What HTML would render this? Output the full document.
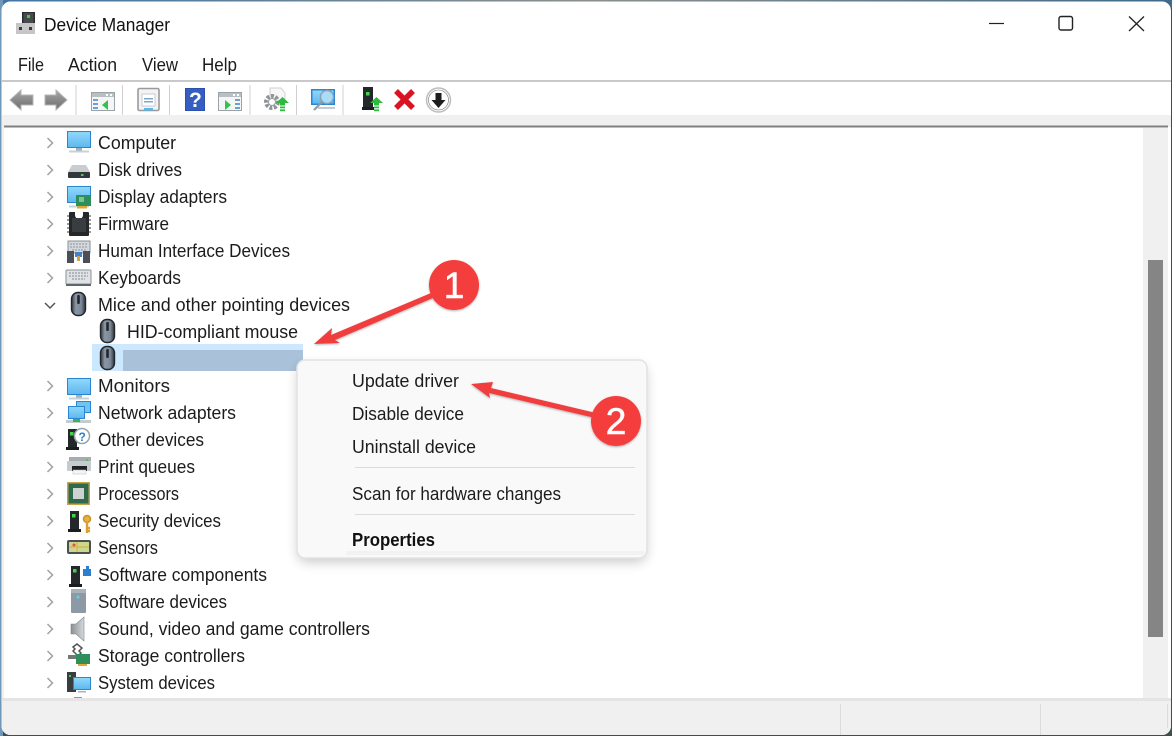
<!DOCTYPE html>
<html><head><meta charset="utf-8"><title>Device Manager</title>
<style>html,body{margin:0;padding:0;background:#fff;overflow:hidden}svg{display:block;filter:blur(.35px)}
text{font-family:"Liberation Sans",sans-serif;font-size:18px;fill:#1c1c1c}</style></head><body>
<svg width="1172" height="736" viewBox="0 0 1172 736" xmlns="http://www.w3.org/2000/svg">
<defs>
<linearGradient id="wp" x1="0" y1="0" x2="1" y2="0"><stop offset="0" stop-color="#3f76a6"/><stop offset=".5" stop-color="#8a8f8c"/><stop offset="1" stop-color="#3f6a8a"/></linearGradient>
<linearGradient id="scr" x1="0" y1="0" x2="0" y2="1"><stop offset="0" stop-color="#8fd8fb"/><stop offset="1" stop-color="#5fb8ee"/></linearGradient>
<linearGradient id="arr" x1="0" y1="0" x2="0" y2="1"><stop offset="0" stop-color="#a8a8a8"/><stop offset="1" stop-color="#6c6c6c"/></linearGradient>
<linearGradient id="ms" x1="0" y1="0" x2="1" y2="0"><stop offset="0" stop-color="#33383e"/><stop offset=".3" stop-color="#8a96a3"/><stop offset=".7" stop-color="#7c8998"/><stop offset="1" stop-color="#2d3238"/></linearGradient>
<linearGradient id="spk" x1="0" y1="0" x2="1" y2="0"><stop offset="0" stop-color="#8b9094"/><stop offset="1" stop-color="#d6d9db"/></linearGradient>
<filter id="sh" x="-10%" y="-10%" width="120%" height="125%"><feGaussianBlur stdDeviation="6"/></filter>
<filter id="ds" x="-20%" y="-20%" width="140%" height="140%"><feDropShadow dx="0" dy="1" stdDeviation="1" flood-color="#000" flood-opacity=".3"/></filter>
<g id="mouse"><rect x="1.5" y="0.5" width="14" height="23" rx="6.5" fill="url(#ms)" stroke="#22262b" stroke-width="1.4"/><rect x="7.2" y="3" width="2.6" height="9" rx="1" fill="#23272c"/></g>
<g id="mon"><rect x="1" y="0" width="24" height="17" fill="#2a86d2"/><rect x="2" y="1" width="22" height="15" fill="url(#scr)"/><rect x="10" y="17" width="6" height="2.5" fill="#9fb2c0"/><rect x="3" y="19.5" width="20" height="2" fill="#c6d2da"/></g>
<g id="srv"><rect x="3" y="1" width="9" height="18" fill="#25282b"/><rect x="5" y="4" width="3.5" height="3.5" fill="#3fd44a"/><path d="M1 19h13v3H1z" fill="#1b1d1f"/></g>
<path id="chev" d="M-2.5-5 L2.5 0 L-2.5 5" fill="none" stroke="#a2a2a2" stroke-width="1.5"/>
<g id="upg"><path d="M0 6 L6.5 0 L13 6 H9 V8.5 H4 V6Z" fill="#2dbb3c"/><rect x="4" y="9.5" width="5" height="1.8" fill="#2dbb3c"/><rect x="4" y="12.4" width="5" height="1.8" fill="#2dbb3c"/></g>
<g id="win"><rect x="0.5" y="0.5" width="23" height="18" fill="#f5f5f5" stroke="#9aa3a8"/><rect x="1" y="1" width="22" height="4" fill="#b9c0c4"/><rect x="15" y="2" width="2" height="2" fill="#fff"/><rect x="19" y="2" width="2" height="2" fill="#fff"/></g>
</defs>

<rect width="1172" height="736" fill="#3f4f50"/>
<rect width="1172" height="8" fill="url(#wp)"/>
<rect x="0" y="0" width="3" height="736" fill="#6f97b8"/>
<rect x="1.500" y="1.500" width="1169.500" height="733.500" rx="9" fill="#fff"/>

<!-- title -->
<g>
<rect x="22" y="12" width="13" height="12" fill="#2a2d30"/><rect x="23.5" y="13" width="10" height="10" fill="#474a4d"/><rect x="27" y="15" width="3" height="3" fill="#36d24a"/>
<rect x="16" y="23" width="19" height="11" fill="#c6c6c6"/><rect x="19" y="27" width="3" height="3" fill="#3a3a3a"/><rect x="29" y="27" width="3" height="3" fill="#3a3a3a"/>
</g>
<text x="44" y="31" textLength="126" lengthAdjust="spacingAndGlyphs" style="fill:#111">Device Manager</text>
<path d="M989 23.5h15" stroke="#222" stroke-width="1.2"/>
<rect x="1059" y="16.5" width="13.5" height="13.5" rx="2" fill="none" stroke="#222" stroke-width="1.4"/>
<path d="M1129 16.5L1144 31M1144 16.5L1129 31" stroke="#222" stroke-width="1.3" fill="none"/>

<!-- menu -->
<text x="18" y="71" textLength="26" lengthAdjust="spacingAndGlyphs">File</text>
<text x="68" y="71" textLength="49" lengthAdjust="spacingAndGlyphs">Action</text>
<text x="142" y="71" textLength="36" lengthAdjust="spacingAndGlyphs">View</text>
<text x="202" y="71" textLength="35" lengthAdjust="spacingAndGlyphs">Help</text>
<rect x="2" y="80" width="1169" height="2" fill="#c9c9c9"/>

<!-- toolbar strip -->
<rect x="2" y="115" width="1169" height="12" fill="#f0f0f0"/>
<g fill="#d0d0d0">
<rect x="75.5" y="85" width="1" height="30"/><rect x="122" y="85" width="1" height="30"/><rect x="169" y="85" width="1" height="30"/><rect x="249.500" y="85" width="1" height="30"/><rect x="296" y="85" width="1" height="30"/><rect x="342.500" y="85" width="1" height="30"/>
</g>
<path d="M10 100L21 90V95H33V105H21V110Z" fill="url(#arr)" stroke="#b5b5b5"/>
<path d="M67 100L56 90V95H45V105H56V110Z" fill="url(#arr)" stroke="#b5b5b5"/>
<use href="#win" x="91" y="92"/>
<g><rect x="93" y="99" width="5" height="2" fill="#6aa2d8"/><rect x="93" y="103" width="5" height="2" fill="#6aa2d8"/><rect x="93" y="107" width="5" height="2" fill="#6aa2d8"/><path d="M102 105L108 100V110Z" fill="#33c24a"/></g>
<rect x="138" y="88.500" width="21" height="22" rx="1.5" fill="#f3f3f3" stroke="#9a9a9a" stroke-width="1.6"/><rect x="142" y="94" width="13" height="12" fill="#fff" stroke="#c6ced4"/><rect x="144" y="98" width="9" height="1.500" fill="#7da8c8"/><rect x="144" y="101" width="9" height="1.500" fill="#7da8c8"/><rect x="144" y="108" width="9" height="2.500" fill="#58b8e8"/>
<rect x="185" y="88" width="20" height="23" fill="#2a4fb0"/><rect x="186" y="89" width="18" height="21" fill="#3a62c4" opacity=".8"/>
<text x="189" y="107" style="font-size:21px;font-weight:bold;fill:#fff">?</text>
<use href="#win" x="218" y="92"/>
<g><path d="M225 100L231 105L225 110Z" fill="#33c24a"/><rect x="235" y="99" width="5" height="2" fill="#6aa2d8"/><rect x="235" y="103" width="5" height="2" fill="#6aa2d8"/><rect x="235" y="107" width="5" height="2" fill="#6aa2d8"/></g>
<path d="M270 88h11l4 5v8h-15z" fill="#f7f7f7" stroke="#cfcfcf"/>
<circle cx="272" cy="102" r="6" fill="none" stroke="#8e9498" stroke-width="4" stroke-dasharray="3 1.500"/><circle cx="272" cy="102" r="3.500" fill="#fff" stroke="#9a9a9a"/>
<use href="#upg" x="276" y="97"/>
<rect x="311" y="89" width="24" height="16" fill="#2a86d2"/><rect x="312.500" y="90.500" width="21" height="13" fill="url(#scr)"/><circle cx="327" cy="97" r="6.500" fill="#a8dcf7" stroke="#8ba2b4" stroke-width="1.500"/><path d="M322 102L314 110" stroke="#8d9aa4" stroke-width="2.200"/><rect x="318" y="107" width="17" height="2" fill="#c2ccd2"/>
<rect x="363" y="87" width="10" height="20" fill="#25282b"/><rect x="366" y="92" width="3.500" height="3.500" fill="#3fd44a"/><rect x="362" y="107" width="12" height="3" fill="#1b1d1f"/>
<use href="#upg" x="370" y="97"/>
<path d="M396 91L413 108M413 91L396 108" stroke="#d81522" stroke-width="5.500" fill="none"/>
<circle cx="438.500" cy="100" r="12" fill="#fff" stroke="#bdbdbd" stroke-width="1.500"/><circle cx="438.500" cy="100" r="10" fill="#fff" stroke="#6f6f6f" stroke-width=".6"/>
<path d="M435.500 93h6v7h4L438.500 108L431.500 100h4z" fill="#1d1d1d"/>

<!-- tree frame -->
<rect x="4" y="125.500" width="1164" height="2" fill="#808080"/>
<rect x="4" y="127" width="1164" height="1" fill="#c0c0c0"/>
<rect x="2" y="127" width="2" height="573" fill="#f0f0f0"/>
<rect x="4" y="128" width="1139" height="570" fill="#fff"/>
<rect x="1143" y="128" width="25" height="570" fill="#f0f0f0"/>
<rect x="1148" y="260" width="15" height="377" fill="#858585"/>

<!-- status bar -->
<rect x="2" y="698" width="1169" height="3" fill="#e4e4e4"/>
<path d="M1.500 701H1171V726a9 9 0 0 1-9 9H10.500a9 9 0 0 1-9-9Z" fill="#f0f0f0"/>
<rect x="840" y="704" width="1" height="31" fill="#dcdcdc"/><rect x="1040" y="704" width="1" height="31" fill="#dcdcdc"/>
<rect x="1167" y="704" width="1" height="24" fill="#dcdcdc"/>

<!-- chevrons -->
<use href="#chev" x="50" y="143"/><use href="#chev" x="50" y="170"/><use href="#chev" x="50" y="197"/><use href="#chev" x="50" y="224"/><use href="#chev" x="50" y="251"/><use href="#chev" x="50" y="278"/>
<path d="M45 303L50 308L55 303" fill="none" stroke="#555" stroke-width="1.500"/>
<use href="#chev" x="50" y="386"/><use href="#chev" x="50" y="413"/><use href="#chev" x="50" y="440"/><use href="#chev" x="50" y="467"/><use href="#chev" x="50" y="494"/><use href="#chev" x="50" y="521"/><use href="#chev" x="50" y="548"/><use href="#chev" x="50" y="575"/><use href="#chev" x="50" y="602"/><use href="#chev" x="50" y="629"/><use href="#chev" x="50" y="656"/><use href="#chev" x="50" y="683"/>

<!-- selection -->
<rect x="92" y="344" width="211" height="27" fill="#cce8ff"/>
<rect x="123" y="350" width="180" height="21" fill="#a9c2d9"/>

<!-- tree icons -->
<use href="#mon" x="66" y="131"/>
<g><path d="M72 165H86L90 172H68Z" fill="#c9cdd0"/><rect x="68" y="172" width="22" height="6" rx="1" fill="#35383a"/><rect x="81" y="174" width="2.500" height="2" fill="#3fd44a"/></g>
<use href="#mon" x="66" y="186"/><rect x="76" y="195" width="15" height="11" fill="#2f8f5c"/><rect x="79" y="197" width="5" height="5" fill="#7ac48e"/><rect x="77" y="206" width="10" height="2.500" fill="#e0a82c"/>
<g><rect x="69" y="212" width="20" height="24" rx="1" fill="#25282b"/><path d="M75 212h8v3a4 4 0 0 1-8 0z" fill="#fff"/><path d="M67 216h2M67 220h2M67 224h2M67 228h2M67 232h2M89 216h2M89 220h2M89 224h2M89 228h2M89 232h2" stroke="#777" stroke-width="1.500"/><rect x="72" y="218" width="14" height="14" fill="#3a3d40"/></g>
<g><rect x="68" y="241" width="22" height="12" fill="#d4d8dc" stroke="#8a9096"/><path d="M70 244h18M70 247h18M72 250h14" stroke="#8e949a" stroke-dasharray="2 1"/><path d="M67 251h7v12h-7zM83 251h7v12h-7z" fill="#4b5058"/><rect x="75" y="252" width="7" height="5" fill="#3f83c8"/><rect x="77" y="256" width="3" height="5" fill="#d8a23c"/></g>
<g><rect x="66" y="270" width="25" height="14" rx="1" fill="#dfe3e6" stroke="#8a9096"/><path d="M69 273h19M69 276h19M72 279h13" stroke="#a2a8ae" stroke-width="1.500" stroke-dasharray="2 1"/><rect x="66" y="284" width="25" height="2" fill="#60666c"/></g>
<use href="#mouse" x="70" y="292"/>
<use href="#mouse" x="99" y="319"/>
<use href="#mouse" x="99" y="346"/>
<use href="#mon" x="66" y="378"/>
<g><rect x="76" y="401" width="15" height="12" fill="#2a86d2"/><rect x="77" y="402" width="13" height="10" fill="#6fc4f2"/><rect x="68" y="406" width="17" height="13" fill="#2a86d2"/><rect x="69" y="407" width="15" height="11" fill="url(#scr)"/><rect x="66" y="420" width="25" height="3" fill="#c4ccd0"/><path d="M73 419h7v3h-7z" fill="#3cb44a"/></g>
<g><use href="#srv" x="65" y="428"/><circle cx="82" cy="436" r="7.500" fill="#fff" stroke="#9aa4ac" stroke-width="1.500"/><text x="78.500" y="441" style="font-size:12px;font-weight:bold;fill:#2a7fd0">?</text></g>
<g><rect x="69" y="457" width="22" height="4" fill="#a6acb0"/><rect x="67" y="461" width="24" height="10" rx="1" fill="#c6cbce"/><rect x="72" y="466" width="15" height="5" fill="#222"/><rect x="73" y="470" width="13" height="4" fill="#f5f5f5" stroke="#bbb" stroke-width=".5"/><rect x="86" y="459" width="2" height="2" fill="#3fd44a"/></g>
<g><rect x="67" y="482" width="23" height="23" fill="#c9a24a"/><rect x="68.500" y="483.500" width="20" height="20" fill="#2e6a4e"/><rect x="73" y="488" width="11" height="11" fill="#cfd2d0"/></g>
<g><use href="#srv" x="67" y="510"/><circle cx="87" cy="519" r="3.500" fill="#e8b040" stroke="#c99428" stroke-width="1.500"/><path d="M87 522v11M87 528h3M87 531h3" stroke="#dba030" stroke-width="2.400"/></g>
<g><rect x="67" y="540" width="24" height="14" rx="2" fill="#4c5054"/><rect x="69" y="542" width="20" height="10" fill="#c9d88c"/><path d="M77 542v10M69 547h20" stroke="#e3b04c" stroke-width="1.200"/><circle cx="74" cy="545" r="1.500" fill="#e05050"/></g>
<g><use href="#srv" x="68" y="565"/><path d="M83 569h3v-3h3v3h2v7h-8z" fill="#2a7fd0"/></g>
<g><rect x="71" y="589" width="15" height="24" rx="1" fill="#8d9aa6"/><rect x="71" y="589" width="15" height="4" fill="#a8b2bb"/><circle cx="78" cy="597" r="1.500" fill="#5fd0e8"/></g>
<path d="M71 624h5l8-7v24l-8-7h-5z" fill="url(#spk)" stroke="#7e8388" stroke-width=".6"/>
<g><path d="M73 647l4-3 5 4-3 3 2 2-3 3-5-5 2-2z" fill="none" stroke="#555" stroke-width="1.500"/><rect x="68" y="655" width="10" height="4" fill="#777"/><rect x="76" y="654" width="14" height="10" fill="#2f8f5c"/><rect x="78" y="664" width="9" height="2" fill="#e0a82c"/></g>
<g><rect x="67" y="672" width="9" height="20" fill="#3a3d40"/><rect x="69" y="675" width="2" height="2" fill="#3fd44a"/><rect x="73" y="677" width="18" height="13" fill="#2a86d2"/><rect x="74" y="678" width="16" height="11" fill="url(#scr)"/><rect x="78" y="691" width="8" height="1.500" fill="#a8b4bc"/></g>
<rect x="74" y="697" width="8" height="1" fill="#999"/>

<!-- tree labels -->
<text x="98" y="149" textLength="78" lengthAdjust="spacingAndGlyphs">Computer</text>
<text x="98" y="176" textLength="84" lengthAdjust="spacingAndGlyphs">Disk drives</text>
<text x="98" y="203" textLength="129" lengthAdjust="spacingAndGlyphs">Display adapters</text>
<text x="98" y="230" textLength="71" lengthAdjust="spacingAndGlyphs">Firmware</text>
<text x="98" y="257" textLength="192" lengthAdjust="spacingAndGlyphs">Human Interface Devices</text>
<text x="98" y="284" textLength="83" lengthAdjust="spacingAndGlyphs">Keyboards</text>
<text x="98" y="311" textLength="252" lengthAdjust="spacingAndGlyphs">Mice and other pointing devices</text>
<text x="127" y="338" textLength="171" lengthAdjust="spacingAndGlyphs">HID-compliant mouse</text>
<text x="98" y="392" textLength="72" lengthAdjust="spacingAndGlyphs">Monitors</text>
<text x="98" y="419" textLength="138" lengthAdjust="spacingAndGlyphs">Network adapters</text>
<text x="98" y="446" textLength="106" lengthAdjust="spacingAndGlyphs">Other devices</text>
<text x="98" y="473" textLength="97" lengthAdjust="spacingAndGlyphs">Print queues</text>
<text x="98" y="500" textLength="81" lengthAdjust="spacingAndGlyphs">Processors</text>
<text x="98" y="527" textLength="123" lengthAdjust="spacingAndGlyphs">Security devices</text>
<text x="98" y="554" textLength="60" lengthAdjust="spacingAndGlyphs">Sensors</text>
<text x="98" y="581" textLength="169" lengthAdjust="spacingAndGlyphs">Software components</text>
<text x="98" y="608" textLength="129" lengthAdjust="spacingAndGlyphs">Software devices</text>
<text x="98" y="635" textLength="272" lengthAdjust="spacingAndGlyphs">Sound, video and game controllers</text>
<text x="98" y="662" textLength="147" lengthAdjust="spacingAndGlyphs">Storage controllers</text>
<text x="98" y="689" textLength="117" lengthAdjust="spacingAndGlyphs">System devices</text>

<!-- context menu -->
<rect x="298" y="366" width="348" height="196" rx="9" fill="#000" opacity=".22" filter="url(#sh)"/>
<rect x="297" y="360" width="350" height="198" rx="8" fill="#f9f9f9" stroke="#e2e2e2" stroke-width="1.500"/>
<text x="352" y="387" textLength="107" lengthAdjust="spacingAndGlyphs">Update driver</text>
<text x="352" y="420" textLength="112" lengthAdjust="spacingAndGlyphs">Disable device</text>
<text x="352" y="453" textLength="124" lengthAdjust="spacingAndGlyphs">Uninstall device</text>
<rect x="355" y="467" width="280" height="1" fill="#dcdcdc"/>
<text x="352" y="500" textLength="209" lengthAdjust="spacingAndGlyphs">Scan for hardware changes</text>
<rect x="355" y="514" width="280" height="1" fill="#dcdcdc"/>
<text x="352" y="546" textLength="83" lengthAdjust="spacingAndGlyphs" style="font-weight:bold;fill:#111">Properties</text>
<rect x="346" y="551" width="299" height="4" fill="#f2f2f2"/>

<!-- annotations -->
<g filter="url(#ds)">
<path d="M314 344L332 328L331 335L431 293L433 298L335 340L340 343Z" fill="#f03c3c"/>
<circle cx="454" cy="285" r="25" fill="#f43e3e"/>
<path d="M471 384L493 382L491 388L596 413L595 418L489 393L490 398Z" fill="#f03c3c"/>
<circle cx="616" cy="421" r="25" fill="#f43e3e"/>
</g>
<text x="454" y="298" text-anchor="middle" style="font-size:37px;fill:#fff;stroke:#fff;stroke-width:.6">1</text>
<text x="616" y="434" text-anchor="middle" style="font-size:37px;fill:#fff;stroke:#fff;stroke-width:.6">2</text>
</svg>
</body></html>
